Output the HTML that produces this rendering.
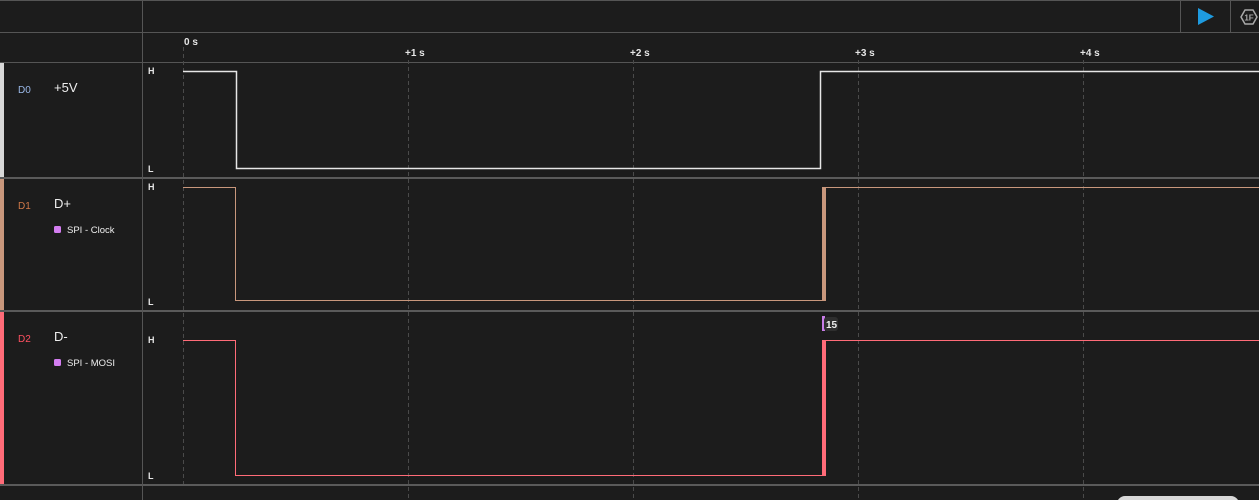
<!DOCTYPE html>
<html><head><style>
html,body{margin:0;padding:0;background:#1c1c1c;width:1259px;height:500px;overflow:hidden}
svg{display:block}
text{font-family:"Liberation Sans",sans-serif}
</style></head><body>
<svg width="1259" height="500" xmlns="http://www.w3.org/2000/svg">
<rect width="1259" height="500" fill="#1c1c1c"/>
<rect x="0" y="0" width="1259" height="1" fill="#555"/>
<!-- horizontal separators -->
<rect x="0" y="32" width="1259" height="1" fill="#555"/>
<rect x="0" y="62" width="1259" height="1" fill="#555"/>
<rect x="0" y="177" width="1259" height="2" fill="#5a5a5a"/>
<rect x="0" y="310" width="1259" height="2" fill="#5a5a5a"/>
<rect x="0" y="484" width="1259" height="2" fill="#5a5a5a"/>
<!-- vertical separator -->
<rect x="142" y="0" width="1" height="500" fill="#555"/>
<rect x="1180" y="0" width="1" height="32" fill="#555"/>
<rect x="1230" y="0" width="1" height="32" fill="#555"/>
<!-- play -->
<polygon points="1198,8 1214,16.5 1198,25" fill="#1e9be0"/>
<polygon points="1245,10 1253,10 1257,17 1253,24 1245,24 1241,17" fill="none" stroke="#aaa" stroke-width="1.5"/>
<text x="1249" y="20.5" font-size="8" fill="#aaa" text-anchor="middle" font-weight="bold">1F</text>
<!-- grid dashed -->
<g stroke="#4a4a4a" stroke-dasharray="4,3" stroke-width="1">
<line x1="183.5" y1="47" x2="183.5" y2="484"/>
<line x1="408.5" y1="60" x2="408.5" y2="500"/>
<line x1="633.5" y1="60" x2="633.5" y2="500"/>
<line x1="858.5" y1="60" x2="858.5" y2="500"/>
<line x1="1083.5" y1="60" x2="1083.5" y2="500"/>
</g>
<g fill="#e6e6e6" font-size="10" font-weight="bold">
<text x="184" y="45">0 s</text>
<text x="405" y="56">+1 s</text>
<text x="630" y="56">+2 s</text>
<text x="855" y="56">+3 s</text>
<text x="1080" y="56">+4 s</text>
</g>
<!-- left color bars -->
<rect x="0" y="63" width="4" height="114" fill="#d8d8d8"/>
<rect x="0" y="179" width="4" height="131" fill="#c8977c"/>
<rect x="0" y="312" width="4" height="172" fill="#ff6b78"/>
<!-- labels -->
<g font-size="9" font-weight="bold" fill="#e6e6e6">
<text x="148" y="74">H</text><text x="148" y="172">L</text>
<text x="148" y="190">H</text><text x="148" y="305">L</text>
<text x="148" y="343">H</text><text x="148" y="479">L</text>
</g>
<text x="18" y="93" font-size="10" fill="#9ab8e8">D0</text>
<text x="54" y="92" font-size="13" fill="#eee">+5V</text>
<text x="18" y="209" font-size="10" fill="#d07848">D1</text>
<text x="54" y="208" font-size="13" fill="#eee">D+</text>
<rect x="54" y="226" width="7" height="7" rx="1.5" fill="#d37df0"/>
<text x="67" y="233" font-size="9.5" fill="#eee">SPI - Clock</text>
<text x="18" y="342" font-size="10" fill="#ff5060">D2</text>
<text x="54" y="341" font-size="13" fill="#eee">D-</text>
<rect x="54" y="359" width="7" height="7" rx="1.5" fill="#d37df0"/>
<text x="67" y="366" font-size="9.5" fill="#eee">SPI - MOSI</text>
<!-- signals -->
<polyline points="183,71.5 236.5,71.5 236.5,168.5 820.5,168.5 820.5,71.5 1259,71.5" fill="none" stroke="#e6e6e6" stroke-width="1.5"/>
<polyline points="183,187.5 235.5,187.5 235.5,300.5 823,300.5" fill="none" stroke="#c8977c" stroke-width="1"/>
<rect x="822" y="187" width="4" height="114" fill="#c8977c"/>
<line x1="826" y1="187.5" x2="1259" y2="187.5" stroke="#c8977c" stroke-width="1"/>
<polyline points="183,340.5 235.5,340.5 235.5,475.5 823,475.5" fill="none" stroke="#ff6b78" stroke-width="1"/>
<rect x="822" y="340" width="4" height="136" fill="#ff6b78"/>
<line x1="826" y1="340.5" x2="1259" y2="340.5" stroke="#ff6b78" stroke-width="1"/>
<!-- 15 marker -->
<rect x="822" y="316" width="3" height="15" fill="#c87de8"/>
<rect x="824" y="317" width="14" height="14" rx="3" fill="#2e2e2e"/>
<text x="826" y="328" font-size="10" font-weight="bold" fill="#eee">15</text>
<!-- bottom pill -->
<rect x="1117" y="496" width="122" height="20" rx="8" fill="#d8d8d8"/>
</svg>
</body></html>
